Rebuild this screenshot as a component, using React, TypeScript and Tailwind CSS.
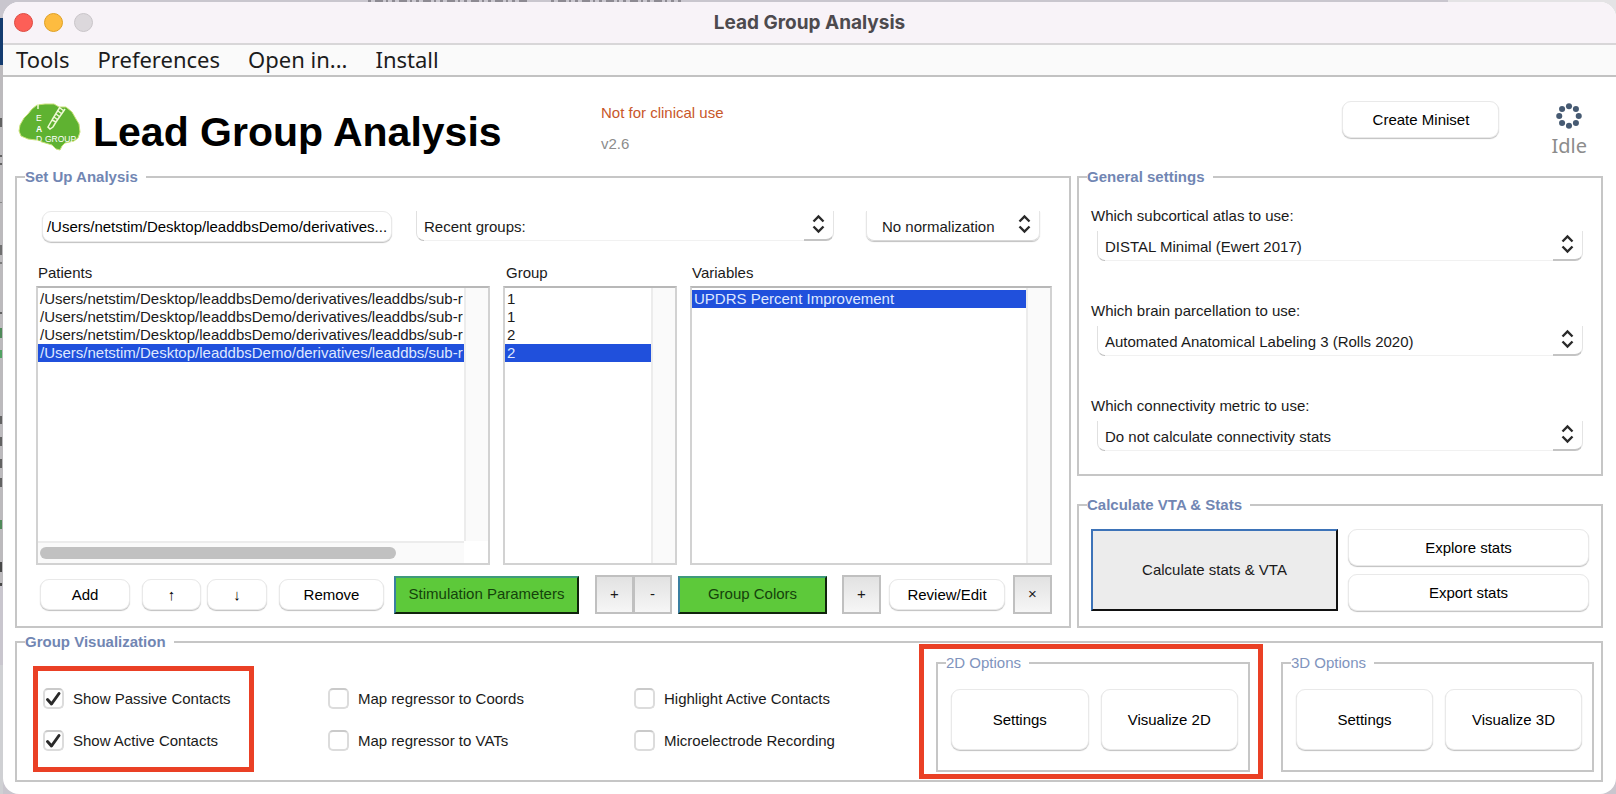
import type { ReactNode } from "react";

const paths = Array.from({ length: 4 }, () => "/Users/netstim/Desktop/leaddbsDemo/derivatives/leaddbs/sub-r");

function Panel({ title, light, className, inner, children }: { title: string; light?: boolean; className: string; inner: string; children: ReactNode }) {
  return (
    <fieldset className={`min-w-0 border-2 border-[#c6c6c6] ${className}`}>
      <legend className={`ml-2 pr-2 leading-5 ${light ? "text-[#8094bd]" : "font-bold text-[#7186b3]"}`}>{title}</legend>
      <div className={inner}>{children}</div>
    </fieldset>
  );
}

function SoftButton({ className, children }: { className: string; children: ReactNode }) {
  return (
    <button
      type="button"
      className={`flex items-center justify-center overflow-hidden whitespace-nowrap rounded-[9px] border border-[#e9e9e9] bg-white pt-px text-black shadow-[0_1px_1px_#c0c0c0] ${className}`}
    >
      {children}
    </button>
  );
}

function SquareButton({ label, children }: { label: string; children: ReactNode }) {
  return (
    <button
      type="button"
      aria-label={label}
      className="h-[39px] w-[39px] shrink-0 border-2 border-[#c0c0c0] bg-linear-to-b from-[#e2e2e2] to-[#f6f6f6]"
    >
      {children}
    </button>
  );
}

function GreenButton({ className, children }: { className: string; children: ReactNode }) {
  return (
    <button
      type="button"
      className={`h-[38px] whitespace-nowrap border-2 border-t-[#3f9a7c] border-r-[#10240c] border-b-[#10240c] border-l-[#3a7fa0] bg-[#5dc93a] text-[#14420b] ${className}`}
    >
      {children}
    </button>
  );
}

function Dropdown({ id, label, value, compact, className }: { id: string; label?: string; value: string; compact?: boolean; className: string }) {
  return (
    <div className={`relative h-[30px] ${className}`}>
      {compact ? (
        <span className="absolute inset-0 rounded-b-lg border-x border-b border-x-[#e6e6e6] border-b-[#d8d8d8] shadow-[0_1px_1px_#c0c0c0]" />
      ) : (
        <>
          <span className="absolute inset-x-2 bottom-0 border-b border-[#f1f1f1]" />
          <span className="absolute inset-y-0 left-0 w-2 rounded-bl-lg border-b border-l border-l-[#e0e0e0] border-b-[#bdbdbd]" />
          <span className="absolute inset-y-0 right-0 w-[30px] rounded-br-lg border-r border-b-2 border-r-[#e4e4e4] border-b-[#c4c4c4]" />
        </>
      )}
      <select
        id={id}
        aria-label={label}
        className={`relative h-[30px] w-full appearance-none bg-transparent pt-[2px] pr-8 leading-5 outline-none ${compact ? "pl-4" : "pl-2"}`}
      >
        <option>{value}</option>
      </select>
      <svg className="pointer-events-none absolute top-[3px] right-[9px]" width="13" height="20" viewBox="0 0 13 20" fill="none" stroke="#2a2a2a" strokeWidth="2.4">
        <path d="M1.5 7.5 6.5 2.5l5 5M1.5 12.5l5 5 5-5" />
      </svg>
    </div>
  );
}

function ListBox({ label, rows, selected, horizontal }: { label: string; rows: string[]; selected: number; horizontal?: boolean }) {
  return (
    <div className="flex min-w-0 flex-col border-2 border-[#d2d2d2] border-t-[#b8b8b8]">
      <div className="flex min-h-0 flex-1">
        <ul role="listbox" aria-label={label} className="min-w-0 flex-1 overflow-hidden pt-[2px]">
          {rows.map((row, i) => (
            <li
              key={i}
              role="option"
              aria-selected={i === selected}
              className={`h-[18px] overflow-hidden whitespace-nowrap pl-[2px] leading-[18px] ${i === selected ? "bg-[#2050dc] text-[#dfe8ff]" : ""}`}
            >
              {row}
            </li>
          ))}
        </ul>
        <div className="w-6 shrink-0 border-l-2 border-[#ececec] bg-[#fafafa]" />
      </div>
      {horizontal && (
        <div className="flex h-[22px] shrink-0">
          <div className="flex flex-1 items-center border-t-2 border-[#ececec] bg-[#fafafa] pl-[2px]">
            <div className="h-3 w-[84%] rounded-full bg-[#c1c1c1]" />
          </div>
          <div className="w-6" />
        </div>
      )}
    </div>
  );
}

function Check({ label, checked }: { label: string; checked?: boolean }) {
  return (
    <label className="flex h-[21px] items-center gap-[9px] whitespace-nowrap">
      <span className="relative block size-[21px]">
        <input
          type="checkbox"
          defaultChecked={checked}
          className="peer block size-[21px] appearance-none rounded-[5px] border-2 border-[#dcdcdc] border-t-[#cacaca] bg-white"
        />
        <svg
          className="pointer-events-none absolute inset-0 hidden peer-checked:block"
          width="21"
          height="21"
          viewBox="0 0 21 21"
          fill="none"
          stroke="#2a2a2a"
          strokeWidth="3"
          strokeLinecap="round"
          strokeLinejoin="round"
        >
          <path d="M4.5 11.5 8.5 16 16 5.5" />
        </svg>
      </span>
      <span className="pt-px">{label}</span>
    </label>
  );
}

function Brain() {
  return (
    <svg className="mt-[2px]" width="63" height="48" viewBox="0 0 63 48" aria-hidden="true">
      <path
        d="M1 28 2 22 6 15 10 11 14 6 19 2 27 1 36 1 41 4 48 4 54 9 58 16 61 21 62 29 60 35 56 38 47 40 44 43 42 47 38 46 34 42 24 39 18 37 10 36 3 33Z"
        fill="#5fb231"
        stroke="#c9e27a"
        strokeWidth="1"
      />
      <g stroke="#eef8d5" strokeWidth="1.5" fill="none">
        <path d="M20 1v5" />
        <path d="m42 4-8 13M47 6l-9 13M42 5l4 3M40 8l4 3M38 11l4 3M36 14l4 3M34 17l4 2M34 17l-4 7 2 2 3-2 3-5" />
      </g>
      <g fill="#ffffff" fontFamily="Liberation Sans" fontSize="8.5">
        <text x="18" y="18">E</text>
        <text x="18" y="29" fontWeight="bold">A</text>
        <text x="18" y="39">D</text>
        <text x="27" y="39">GROUP</text>
      </g>
    </svg>
  );
}

function Spinner() {
  const dots = [
    [12, 3], [18.4, 5.6], [21, 12], [18.4, 18.4],
    [12, 21], [5.6, 18.4], [3, 12], [5.6, 5.6],
  ];
  return (
    <svg width="26" height="26" viewBox="0 0 24 24" fill="#465a72" aria-hidden="true">
      {dots.map(([x, y]) => (
        <circle key={`${x}-${y}`} cx={x} cy={y} r="2.8" />
      ))}
    </svg>
  );
}

function Setting({ id, label, value }: { id: string; label: string; value: string }) {
  return (
    <div>
      <label htmlFor={id} className="block leading-5">{label}</label>
      <Dropdown id={id} value={value} className="mt-[5px] ml-[6px]" />
    </div>
  );
}

/* Slivers of the windows that lie behind this one. */
function Desktop() {
  const marks = [
    [118, 9, "#444"], [155, 2, "#444"], [163, 2, "#444"], [202, 1, "#777"], [245, 10, "#555"], [262, 2, "#666"],
    [312, 2, "#444"], [328, 10, "#2c7a3a"], [350, 8, "#2f9a45"], [416, 8, "#444"], [437, 9, "#444"],
    [459, 9, "#444"], [478, 9, "#444"], [520, 9, "#2c7a3a"], [562, 10, "#222"], [583, 3, "#222"],
  ] as const;
  return (
    <svg className="absolute top-0 left-0" width="700" height="794" aria-hidden="true">
      <rect y="18" width="3" height="47" fill="#143c70" />
      <rect y="65" width="3" height="520" fill="#bcbabd" />
      <rect y="665" width="3" height="129" fill="#cfd0d3" />
      {marks.map(([y, h, fill]) => (
        <rect key={y} y={y} width="2" height={h} fill={fill} opacity="0.75" />
      ))}
      <path d="M368 1H528M551 1H681" stroke="#8d8a92" strokeWidth="2" strokeDasharray="3 4 8 3 2 4" />
    </svg>
  );
}

export default function App() {
  return (
    <div className="relative min-h-screen bg-[#c9c6ce] pt-[2px] pl-[3px] font-['Liberation_Sans',Arial,sans-serif] text-[15px] text-[#1a1a1a]">
      <Desktop />
      <div className="absolute top-0 right-0 h-10 w-[168px] bg-[#e4e3e5]" />
      <div className="relative flex min-h-[792px] flex-col overflow-hidden rounded-2xl bg-white">
        <header className="grid h-[43px] grid-cols-[1fr_auto_1fr] items-center border-b-2 border-[#d8d6d8] bg-[#f8f3f8] px-[11px]">
          <div className="flex gap-[11px]">
            <button type="button" aria-label="Close" className="size-[19px] rounded-full border border-[#dd4a41] bg-[#fd5f57]" />
            <button type="button" aria-label="Minimize" className="size-[19px] rounded-full border border-[#dfa023] bg-[#fdbc40]" />
            <button type="button" aria-label="Zoom" className="size-[19px] rounded-full border border-[#c9c5c9] bg-[#dcd8dc]" />
          </div>
          <div className="font-['Inter',sans-serif] text-[19px] leading-6 font-bold text-[#4d4a4e]">Lead Group Analysis</div>
        </header>
        <nav className="flex h-8 items-center gap-7 border-b-2 border-[#c2c2c2] bg-[#fafafa] px-[13px] pb-[2px] font-['Noto_Sans',sans-serif] text-[22px] leading-7 text-[#1c1c1c]">
          <button type="button">Tools</button>
          <button type="button">Preferences</button>
          <button type="button">Open in...</button>
          <button type="button">Install</button>
        </nav>

        <main className="pr-[13px] pb-3 pl-3">
          <div className="flex h-[90px] pt-6 pr-4 pl-[3px]">
            <Brain />
            <h1 className="mt-[7px] ml-3 w-[508px] shrink-0 text-[41px] leading-[48px] font-bold text-black">Lead Group Analysis</h1>
            <div className="flex flex-col gap-[11px] pt-[2px] leading-5">
              <span className="text-[#c8572a]">Not for clinical use</span>
              <span className="text-[#8c8c8c]">v2.6</span>
            </div>
            <SoftButton className="ml-auto h-[37px] w-[157px]">Create Miniset</SoftButton>
            <div className="ml-[52px] flex flex-col items-center pt-[2px]">
              <Spinner />
              <span className="mt-[3px] font-['Noto_Sans',sans-serif] text-[20px] leading-7 text-[#8c8c8c]">Idle</span>
            </div>
          </div>

          <div className="grid grid-cols-[minmax(0,1056fr)_minmax(0,526fr)] gap-x-[6px]">
            <Panel title="Set Up Analysis" className="h-[461px]" inner="pt-6 pr-[17px] pl-[19px]">
              <div className="flex pr-[12px] pl-[6px]">
                <SoftButton className="h-[31px] w-[350px]">/Users/netstim/Desktop/leaddbsDemo/derivatives...</SoftButton>
                <Dropdown id="recent" label="Recent groups" value="Recent groups:" className="ml-6 min-w-0 flex-1" />
                <Dropdown id="norm" label="Normalization" value="No normalization" compact className="ml-8 w-[174px]" />
              </div>
              <div className="mt-[21px] grid grid-cols-[454fr_174fr_362fr] gap-x-[13px] leading-5">
                <span className="pl-[2px]">Patients</span>
                <span className="pl-[3px]">Group</span>
                <span className="pl-[2px]">Variables</span>
              </div>
              <div className="mt-[3px] grid h-[279px] grid-cols-[454fr_174fr_362fr] gap-x-[13px]">
                <ListBox label="Patients" rows={paths} selected={3} horizontal />
                <ListBox label="Group" rows={["1", "1", "2", "2"]} selected={3} />
                <ListBox label="Variables" rows={["UPDRS Percent Improvement"]} selected={0} />
              </div>
              <div className="mt-[10px] flex items-center pl-1">
                <SoftButton className="h-[31px] w-[90px] shrink-0">Add</SoftButton>
                <SoftButton className="ml-3 h-[31px] w-[59px] shrink-0">↑</SoftButton>
                <SoftButton className="ml-[6px] h-[31px] w-[60px] shrink-0">↓</SoftButton>
                <SoftButton className="ml-3 h-[31px] w-[105px] shrink-0">Remove</SoftButton>
                <GreenButton className="ml-[10px] w-[185px] shrink-0">Stimulation Parameters</GreenButton>
                <div className="ml-4 flex -space-x-px">
                  <SquareButton label="Add group">+</SquareButton>
                  <SquareButton label="Remove group">-</SquareButton>
                </div>
                <GreenButton className="ml-[6px] w-[149px] shrink-0">Group Colors</GreenButton>
                <div className="ml-auto flex items-center gap-2">
                  <SquareButton label="Add variable">+</SquareButton>
                  <SoftButton className="h-[31px] w-[116px]">Review/Edit</SoftButton>
                  <SquareButton label="Remove variable">×</SquareButton>
                </div>
              </div>
            </Panel>

            <div className="flex flex-col gap-[19px]">
              <Panel title="General settings" className="h-[309px]" inner="pt-[19px] pr-[18px] pl-3">
                <div className="flex flex-col gap-10">
                  <Setting id="atlas" label="Which subcortical atlas to use:" value="DISTAL Minimal (Ewert 2017)" />
                  <Setting id="parcellation" label="Which brain parcellation to use:" value="Automated Anatomical Labeling 3 (Rolls 2020)" />
                  <Setting id="metric" label="Which connectivity metric to use:" value="Do not calculate connectivity stats" />
                </div>
              </Panel>
              <Panel title="Calculate VTA & Stats" className="h-[133px]" inner="px-3 pt-[14px]">
                <div className="grid grid-cols-[247fr_241fr] gap-x-[10px]">
                  <button
                    type="button"
                    className="h-[82px] border-2 border-t-[#3d73b8] border-r-[#111] border-b-[#111] border-l-[#3d73b8] bg-[#ececec]"
                  >
                    Calculate stats &amp; VTA
                  </button>
                  <div className="flex flex-col gap-2">
                    <SoftButton className="h-[37px]">Explore stats</SoftButton>
                    <SoftButton className="h-[37px]">Export stats</SoftButton>
                  </div>
                </div>
              </Panel>
            </div>
          </div>

          <Panel title="Group Visualization" className="mt-1 h-[150px]" inner="pr-[7px] pl-4">
            <div className="-mt-2 flex items-start">
              <div className="mt-[22px] flex h-[106px] w-[221px] shrink-0 flex-col gap-[21px] border-[5px] border-[#ea4025] pt-[17px] pl-[5px]">
                <Check label="Show Passive Contacts" checked />
                <Check label="Show Active Contacts" checked />
              </div>
              <div className="mt-[44px] ml-[74px] flex w-[306px] flex-col gap-[21px]">
                <Check label="Map regressor to Coords" />
                <Check label="Map regressor to VATs" />
              </div>
              <div className="mt-[44px] flex flex-col gap-[21px]">
                <Check label="Highlight Active Contacts" />
                <Check label="Microelectrode Recording" />
              </div>
              <div className="ml-auto h-[135px] w-[344px] shrink-0 border-[5px] border-[#ea4025] pt-1 pr-[8px] pl-3">
                <Panel title="2D Options" light className="h-[119px]" inner="grid grid-cols-2 gap-3 pt-4 pr-[10px] pl-[13px]">
                  <SoftButton className="h-[61px]">Settings</SoftButton>
                  <SoftButton className="h-[61px]">Visualize 2D</SoftButton>
                </Panel>
              </div>
              <Panel title="3D Options" light className="mt-[9px] ml-[18px] h-[119px] w-[313px] shrink-0" inner="grid grid-cols-2 gap-3 pt-4 pr-[10px] pl-[13px]">
                <SoftButton className="h-[61px]">Settings</SoftButton>
                <SoftButton className="h-[61px]">Visualize 3D</SoftButton>
              </Panel>
            </div>
          </Panel>
        </main>
      </div>
    </div>
  );
}
